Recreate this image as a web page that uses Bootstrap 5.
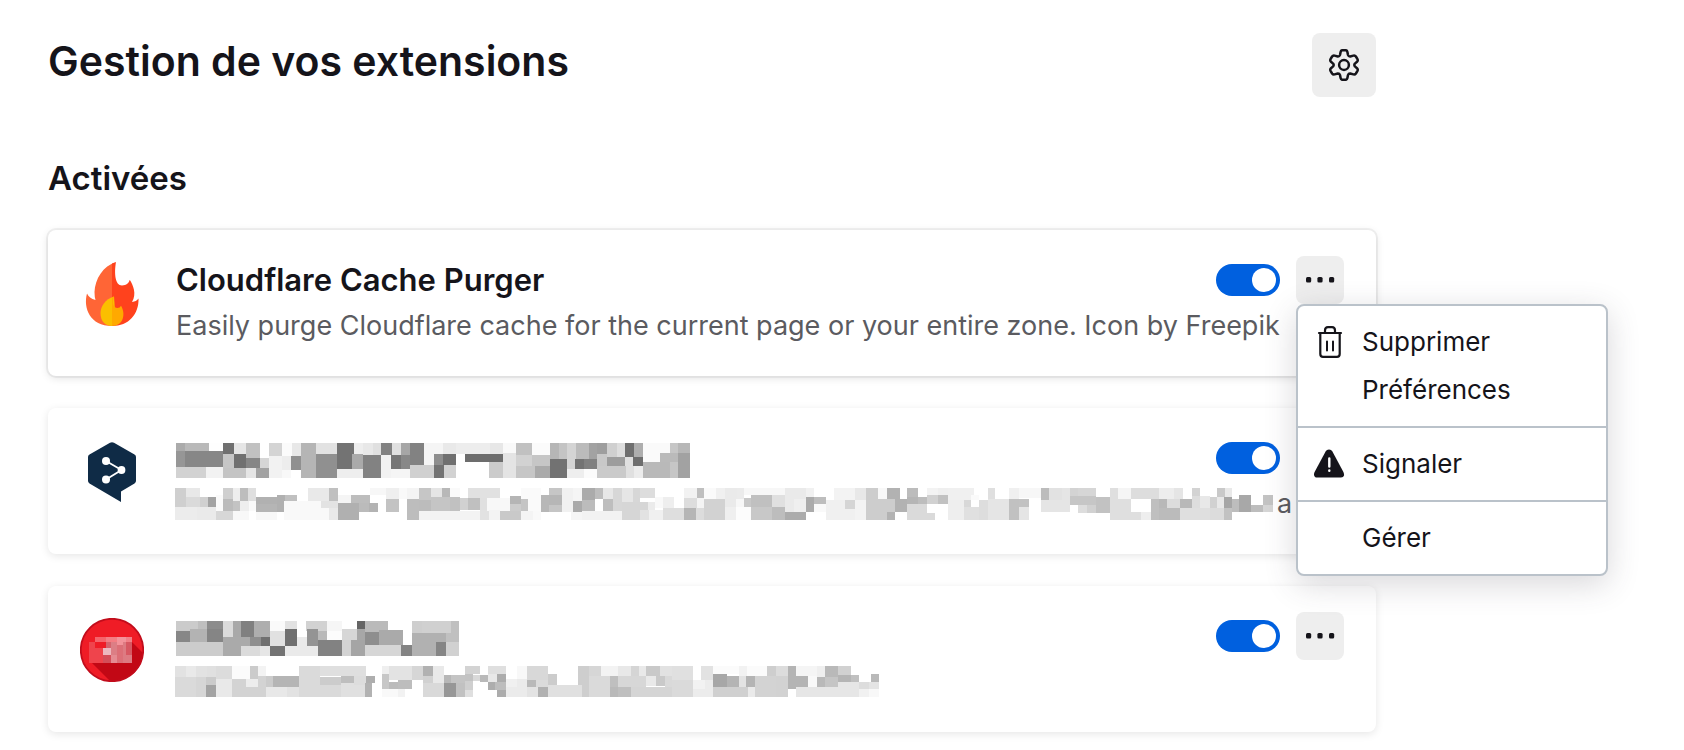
<!DOCTYPE html>
<html lang="fr">
<head>
<meta charset="utf-8">
<meta name="viewport" content="width=device-width, initial-scale=1">
<title>Gestion de vos extensions</title>
<link href="https://cdn.jsdelivr.net/npm/bootstrap@5.3.0/dist/css/bootstrap.min.css" rel="stylesheet">
<style>
  body { font-family: Inter, "Liberation Sans", sans-serif; color: #15141a; background: #fff; overflow: hidden; }
  .addons-page { max-width: 1424px; padding: 33px 48px 16px; }
  .page-title { font-size: 41px; line-height: 56px; font-weight: 600; }
  .section-title { font-size: 33px; line-height: 40px; font-weight: 600; margin: 61px 0 32px; }
  .icon-btn { width: 48px; height: 48px; padding: 0; border: 0; border-radius: 8px; background: #eee; color: #15141a; }
  .icon-btn-lg { width: 64px; height: 64px; }
  .icon-btn:hover { background: #e0e0e1; }
  .addon-list { gap: 32px; }
  .addon-card { height: 146px; padding: 26px 32px; border: 0; border-radius: 8px; background: #fff; box-shadow: 0 2px 8px rgba(12,12,13,.1); }
  .addon-card.is-active { box-shadow: 0 0 0 2px rgba(12,12,13,.05), 0 2px 8px rgba(12,12,13,.12); }
  .addon-icon { width: 64px; height: 64px; margin: 6px 32px 0 0; }
  .addon-name { font-size: 31px; line-height: 40px; font-weight: 600; margin: 0; }
  .addon-desc { font-size: 27px; line-height: 40px; min-height: 40px; color: #5b5b60; margin: 2px 0 0; white-space: nowrap; }
  .addon-head { height: 48px; }
  .mosaic-name { height: 35px; margin-top: 4px; }
  .mosaic-desc { height: 32px; margin-left: -1px; }
  .addon-switch.form-check-input {
    width: 64px; height: 32px; margin: 0 16px 0 0; border: 0; border-radius: 16px; background-color: #0060df;
    background-image: url("data:image/svg+xml,%3Csvg xmlns='http://www.w3.org/2000/svg' viewBox='0 0 32 32'%3E%3Ccircle cx='16' cy='16' r='12' fill='%23fff'/%3E%3C/svg%3E");
    background-size: 32px 32px; background-position: right center;
  }
  .addon-switch.form-check-input:not(:checked) { background-color: #8f8f9d; background-position: left center; }
  .addon-menu.dropdown-menu { top: 48px; left: 0; width: 312px; padding: 12px 0; border: 2px solid #bac2ca; border-radius: 8px; background: #fff; font-size: 26px; box-shadow: 0 8px 32px rgba(58,57,68,.2); }
  .addon-menu .dropdown-item { display: flex; align-items: center; gap: 16px; height: 48px; padding: 0 16px; color: #15141a; line-height: 48px; }
  .addon-menu .dropdown-divider { margin: 12px 0; border-top: 2px solid #bac2ca; opacity: 1; }
  .menu-icon { width: 32px; height: 32px; flex: none; }
</style>
</head>
<body>
<main class="addons-page">
  <header class="d-flex justify-content-between align-items-start">
    <h1 class="page-title m-0">Gestion de vos extensions</h1>
    <button type="button" class="btn icon-btn icon-btn-lg d-flex align-items-center justify-content-center" aria-label="Outils">
      <svg width="32" height="32" viewBox="0 0 32 32" fill="none" stroke="currentColor" stroke-width="2.500" stroke-linejoin="round" aria-hidden="true">
        <path d="M14.300 1.200H17.700Q19.100 1.300 19.400 2.900L20 6Q20.500 7.600 22.200 7.500L25.400 6.600Q27 6.200 27.900 7.500L29.500 10.200Q30.200 11.600 29 12.800L26.900 14.600Q25.800 16 26.900 17.400L29 19.200Q30.200 20.400 29.500 21.800L27.900 24.500Q27 25.800 25.400 25.400L22.200 24.500Q20.500 24.400 20 26L19.400 29.100Q19.100 30.700 17.700 30.800H14.300Q12.900 30.700 12.600 29.100L12 26Q11.500 24.400 9.800 24.500L6.600 25.400Q5 25.800 4.100 24.500L2.500 21.800Q1.800 20.400 3 19.200L5.100 17.400Q6.200 16 5.100 14.600L3 12.800Q1.800 11.600 2.500 10.200L4.100 7.500Q5 6.200 6.600 6.600L9.800 7.500Q11.500 7.600 12 6L12.600 2.900Q12.900 1.300 14.300 1.200Z"/>
        <circle cx="16" cy="16" r="4.900"/>
      </svg>
    </button>
  </header>

  <h2 class="section-title">Activées</h2>

  <section class="addon-list d-flex flex-column" aria-label="Extensions activées">
    <article class="card addon-card is-active flex-row align-items-start">
      <svg class="addon-icon flex-shrink-0" viewBox="0 0 64 64" aria-hidden="true">
        <path fill="#ff6536" d="M36 0C23 4 15 17 14.500 30Q14.500 35 15.500 38C11 37 8.500 34.500 7 31.500C3 46 10 64 32 64L34 32V1Z"/>
        <path fill="#ff421d" d="M32 1.500L36 0C34 11 35 23.500 42 23.500C46.500 23.500 49 21 49.700 17.800C53 23 57 32 52 40Q56.500 39.500 58.500 36.500C59 52 49 64 32 64Z"/>
        <path fill="#fbbf00" d="M34 34.500C25 37 20.500 45 20.500 51C20.500 59 25 64 32 64L35 48Z"/>
        <path fill="#ffa900" d="M32 35.500L34 34.500C32 40 33 46 37.500 46Q40 46 41 43.800C46 52 43.500 64 32 64Z"/>
      </svg>
      <div class="flex-grow-1">
        <div class="addon-head d-flex align-items-center">
          <h3 class="addon-name me-auto">Cloudflare Cache Purger</h3>
          <input class="form-check-input addon-switch" type="checkbox" role="switch" checked aria-label="Activer Cloudflare Cache Purger">
          <div class="position-relative">
            <button type="button" class="btn icon-btn" aria-label="Plus d’options" aria-expanded="true"><svg width="32" height="6" viewBox="0 0 32 6" class="d-block mx-auto" fill="currentColor"><rect x="2" width="5.200" height="5.500" rx="1.500"/><rect x="13.400" width="5.200" height="5.500" rx="1.500"/><rect x="25" width="5.200" height="5.500" rx="1.500"/></svg></button>
            <div class="dropdown-menu show addon-menu">
              <button type="button" class="dropdown-item">
                <svg class="menu-icon" viewBox="0 0 32 32" fill="none" stroke="currentColor" stroke-width="2.200" stroke-linecap="round" aria-hidden="true"><path d="M5 7H27M11 6V4.500Q11 1.100 14 1.100H18Q21 1.100 21 4.500V6M6.300 7.500V28Q6.300 30.900 9 30.900H23Q25.700 30.900 25.700 28V7.500"/><path d="M13 15.500V24.500M19 15.500V24.500" stroke-width="2"/></svg>Supprimer
              </button>
              <button type="button" class="dropdown-item"><span class="menu-icon"></span>Préférences</button>
              <hr class="dropdown-divider">
              <button type="button" class="dropdown-item">
                <svg class="menu-icon" viewBox="0 0 32 32" aria-hidden="true"><path fill="#15141a" d="M15 1.500C13.500 1.500 12.300 2.200 11.600 3.500L.6 24Q-1 27.500 1.400 29.200Q2 29.500 3 29.500H27Q29.500 29.500 30 27.500Q30.300 26 29.400 24L18.400 3.500C17.700 2.200 16.500 1.500 15 1.500Z"/><path fill="none" stroke="#fff" stroke-width="2.400" stroke-linecap="round" d="M15.300 10.500V18.500M15.300 22.500V22.800"/></svg>Signaler
              </button>
              <hr class="dropdown-divider">
              <button type="button" class="dropdown-item"><span class="menu-icon"></span>Gérer</button>
            </div>
          </div>
        </div>
        <p class="addon-desc">Easily purge Cloudflare cache for the current page or your entire zone. Icon by Freepik</p>
      </div>
    </article>

    <article class="card addon-card flex-row align-items-start">
      <svg class="addon-icon flex-shrink-0" viewBox="0 -2 64 64" aria-hidden="true">
        <path fill="#0f2b46" d="M30 .8Q32-.4 34 .8L54.500 12.500Q56 13.400 56 15V39Q56 40.500 54.500 41.400L41 49.500V60L9.500 41.400Q8 40.500 8 39V15Q8 13.400 9.500 12.500Z"/>
        <path fill="none" stroke="#fff" stroke-width="1.800" d="M26 19L41.500 28L26 37.500"/>
        <circle cx="26" cy="19" r="4" fill="#fff"/><circle cx="41.500" cy="28" r="3.900" fill="#fff"/><circle cx="26" cy="37.500" r="4" fill="#fff"/>
      </svg>
      <div class="flex-grow-1">
        <div class="addon-head d-flex align-items-center">
          <svg class="mosaic-name me-auto" width="514" viewBox="408 129 1542 105" shape-rendering="crispEdges" data-tiles="nameA" role="img" aria-label="Nom masqué"></svg>
          <input class="form-check-input addon-switch" type="checkbox" role="switch" checked aria-label="Activer la deuxième extension">
          <button type="button" class="btn icon-btn" aria-label="Plus d’options"><svg width="32" height="6" viewBox="0 0 32 6" class="d-block mx-auto" fill="currentColor"><rect x="2" width="5.200" height="5.500" rx="1.500"/><rect x="13.400" width="5.200" height="5.500" rx="1.500"/><rect x="25" width="5.200" height="5.500" rx="1.500"/></svg></button>
        </div>
        <p class="addon-desc d-flex align-items-center"><svg class="mosaic-desc flex-shrink-0 me-1" width="1098" viewBox="405 267 3294 96" shape-rendering="crispEdges" data-tiles="descA" role="img" aria-label="Description masquée"></svg>a</p>
      </div>
    </article>

    <article class="card addon-card flex-row align-items-start">
      <svg class="addon-icon flex-shrink-0" viewBox="0 0 64 64" aria-hidden="true">
        <circle cx="32" cy="32" r="31" fill="#ef1c26"/>
        <path fill="#c20815" d="M52 24L63 35C62 52 49 63 32 63L29 62L12 45L52 44Z"/>
        <circle cx="32" cy="32" r="31.200" fill="none" stroke="#c20c1b" stroke-width="1.800"/>
        <g shape-rendering="crispEdges">
          <path fill="#ef444c" d="M9 24H23V45H9Z"/><path fill="#f5646b" d="M15 19H26V24H15Z"/><path fill="#ef1c26" d="M15 24H26V30H15Z"/>
          <path fill="#f47d83" d="M26 19H37V24H26Z"/><path fill="#f3939a" d="M37 19H46V27H37Z"/><path fill="#f17f86" d="M46 19H52V24H46Z"/>
          <path fill="#d5636c" d="M26 24H31V30H26Z"/><path fill="#dc7e85" d="M31 24H37V45H31Z"/><path fill="#dc6f77" d="M37 27H46V45H37Z"/>
          <path fill="#dd7b82" d="M43 24H52V45H43Z"/><path fill="#d75862" d="M46 24H52V37H46Z"/><path fill="#ef444c" d="M15 30H23V45H15Z"/><path fill="#edb8bf" d="M23 30H31V37H23Z"/>
          <path fill="#d34e59" d="M23 37H31V45H23Z"/><path fill="#e58b92" d="M31 37H37V45H31Z"/>
        </g>
      </svg>
      <div class="flex-grow-1">
        <div class="addon-head d-flex align-items-center">
          <svg class="mosaic-name me-auto" width="283" viewBox="408 123 849 105" shape-rendering="crispEdges" data-tiles="nameB" role="img" aria-label="Nom masqué"></svg>
          <input class="form-check-input addon-switch" type="checkbox" role="switch" checked aria-label="Activer la troisième extension">
          <button type="button" class="btn icon-btn" aria-label="Plus d’options"><svg width="32" height="6" viewBox="0 0 32 6" class="d-block mx-auto" fill="currentColor"><rect x="2" width="5.200" height="5.500" rx="1.500"/><rect x="13.400" width="5.200" height="5.500" rx="1.500"/><rect x="25" width="5.200" height="5.500" rx="1.500"/></svg></button>
        </div>
        <p class="addon-desc d-flex align-items-center"><svg class="mosaic-desc" width="704" viewBox="405 261 2112 96" shape-rendering="crispEdges" data-tiles="descB" role="img" aria-label="Description masquée"></svg></p>
      </div>
    </article>
  </section>
</main>
<script src="https://cdn.jsdelivr.net/npm/bootstrap@5.3.0/dist/js/bootstrap.bundle.min.js"></script>
<script>
// Redacted text: each group is [dx, dy, "x1 x2 y1 y2 grey; …"], grey being one hex byte.
const tiles = {
  nameA: [[0, 0, `408 435 129 153 ab;435 507 129 153 b9;507 549 129 153 fe;408 435 153 201 96;435 549 153 201 87;408 498 201 234 d2;498 549 201 234 f2;549 582 129 162 70;549 582 162 204 c6;549 618 204 234 c4;582 618 129 162 e6;618 660 129 174 c1;582 618 162 204 70;618 660 174 204 86;618 648 204 234 e5;648 687 204 234 a2;660 687 174 204 d6;687 726 129 168 d4;687 726 168 234 f2;726 756 129 168 fb;726 753 168 210 ed;756 783 129 168 e8;753 783 168 210 90;726 753 210 234 f8;783 828 129 234 b5;828 891 129 162 e2;828 891 162 234 90;891 942 129 207 73;942 969 129 162 ee;936 969 162 207 aa;891 969 207 234 ee;969 999 129 165 e8;999 1023 129 165 e0;969 1023 165 234 82;1023 1056 129 165 82;1023 1053 165 234 f2`],
    [990, 90, `66 93 39 75 e0;93 120 39 75 a6;120 162 39 117 82;63 93 75 117 76;93 120 75 117 88;63 120 117 144 f5;162 219 39 105 f5;120 192 105 144 d0;219 258 39 72 e9;192 219 72 105 8e;219 258 72 105 70;192 222 105 144 73;222 258 105 144 d2;258 360 39 72 ed;360 399 39 72 e7;285 399 72 96 6d;357 399 96 144 cb;399 438 39 69 f9;399 438 69 144 e4;438 486 39 75 c1;486 540 39 75 fb;438 486 75 108 d2;486 540 75 108 c6;438 495 108 144 c6;495 540 108 144 aa;540 567 39 87 b6;567 591 39 87 c4;540 591 87 144 72;591 618 39 117 d4;618 657 39 87 bb;657 681 39 87 a2;681 711 39 72 9e;615 642 87 117 73;642 681 87 117 80;591 642 117 144 ee;642 681 117 144 fb;681 711 72 108 c8;711 741 39 81 d0;741 765 39 81 de;711 765 81 108 9d;681 768 108 144 ca;765 792 39 81 6f;792 819 39 81 ae;765 789 81 108 e0;789 819 81 108 6e;768 792 108 144 e0;792 819 108 144 ec;819 900 39 96 fa;870 924 69 96 ba;900 924 39 69 c6;924 960 39 69 b7;819 900 96 144 b9;900 927 96 144 c6;924 960 69 144 a2`]],
  descA: [[0, 0, `405 438 267 324 cf;438 480 267 294 e8;438 480 294 324 da;480 504 294 324 d0;504 528 294 324 a3;405 471 324 363 ec;471 528 324 363 ea;528 549 288 336 fa;528 579 336 363 d7;549 579 267 300 cf;579 600 267 306 ee;549 579 300 336 bb;579 600 306 336 c3;600 624 267 306 bd;624 648 267 306 df;600 627 306 336 ee;579 627 336 363 f8;627 648 306 336 fa;648 711 294 315 b1;648 711 315 339 b5;711 735 288 339 b0;735 771 288 312 c0;648 711 339 363 f8;732 867 306 363 f9;804 867 267 306 e9;867 894 267 306 c0;843 894 306 327 e3;867 894 327 363 e9;894 933 288 312 f5;894 957 312 363 b0;933 990 288 312 bd;957 987 312 339 bb;987 1014 312 339 b3;990 1038 267 288 f7;1038 1077 267 300 ef;1038 1077 300 339 c3`],
    [990, 90, `87 111 177 210 f9;111 147 177 210 f4;111 147 210 273 bd;147 183 177 213 c6;183 216 177 204 e5;216 240 177 204 b8;147 183 213 246 bc;183 240 204 246 c5;240 270 204 246 c1;240 270 177 204 fa;270 294 207 243 d1;294 330 207 243 c0;294 390 177 207 e1;330 351 207 243 e0;147 330 246 273 f3;330 357 243 273 e2;351 420 207 246 f8;357 390 243 273 f3;390 453 246 273 c9;420 453 201 225 b5;420 453 225 246 cc;453 474 210 246 c4;453 513 177 210 fa;474 513 210 246 fa;453 489 246 273 f4;489 513 246 273 f9;513 537 198 249 b7;537 576 177 198 c6;537 576 198 228 b6;537 576 228 249 c5;576 609 177 249 f1;609 636 177 216 f5;609 636 216 249 aa;603 636 249 273 f5;636 675 177 213 ab;675 699 177 210 bd;636 675 213 246 bc;636 756 246 273 f2;699 729 177 210 e7;729 756 177 207 d7;699 729 210 246 be;729 756 207 246 d7;756 789 177 219 e6;789 810 177 219 d7;810 855 177 207 dd;756 834 219 246 d6;756 810 246 273 d6;810 837 243 273 e2;834 855 219 243 eb;855 879 204 237 f9;879 912 204 237 ee;837 879 243 273 f0;879 942 237 273 de;942 981 177 207 f2;981 1002 177 207 bf;942 981 207 237 dd;981 1002 207 237 f4;942 978 237 273 b5;978 1002 237 273 dc;1002 1065 210 273 d2`],
    [1980, 210, `0 12 57 87 bf;12 48 57 90 fa;48 75 57 90 f0;75 111 57 114 ea;111 132 57 90 eb;12 75 90 153 d2;75 108 114 153 ef;108 132 90 114 f7;108 153 114 153 fc;132 255 57 78 f7;132 153 87 114 c8;153 216 78 114 c0;216 255 78 114 e0;153 216 114 153 c8;216 255 114 153 bd;255 318 57 129 ea;282 318 90 129 ef;255 318 129 153 ac;318 342 57 84 f1;318 342 84 129 ab;342 378 84 105 bd;342 378 105 129 f9;402 465 57 93 f3;378 465 93 153 f0;435 465 93 120 d5;465 498 57 93 e8;465 498 93 153 f3;498 534 57 153 cd;534 561 57 90 f8;561 600 57 90 b2;534 585 90 129 cd;534 561 129 153 cd;561 585 129 153 b3;585 621 90 129 b2;621 654 57 84 bc;621 654 84 105 b5;654 681 84 105 bd;621 681 105 153 da;681 705 132 153 da;681 714 57 78 f3;681 714 78 105 d1;714 744 78 105 c1;714 744 57 78 ef;744 822 57 93 f0;744 792 93 153 ee;792 813 93 114 d8;813 837 78 93 fa;792 837 114 153 e0;837 864 93 153 dd;864 885 57 90 df;864 900 90 153 e5`],
    [2880, 210, `0 27 90 153 e5;27 57 57 90 f0;57 123 57 87 f7;27 57 90 153 c1;57 87 90 114 c2;57 87 114 153 e5;123 147 57 93 bc;147 186 57 93 e2;186 210 57 93 e5;123 210 93 129 e5;210 234 57 81 d3;234 288 57 84 d6;210 288 81 108 c6;234 261 108 132 dd;261 288 108 132 d1;288 330 84 132 c2;330 354 57 90 df;354 393 57 90 f5;330 393 90 153 df;393 477 57 90 dd;393 423 129 153 df;423 453 129 153 ee;453 477 90 153 bf;477 501 90 117 b8;477 540 117 153 bb;477 522 57 90 ed;522 549 57 90 e5;501 540 90 117 dc;540 576 90 117 b8;576 600 57 81 d3;576 600 81 117 dd;600 630 81 117 e8;630 651 84 117 d1;540 630 117 153 df;630 672 117 153 dc;651 675 57 84 c9;675 696 57 84 e9;651 672 84 117 e8;672 696 84 117 a6;672 696 117 153 c2;696 717 90 129 bd;717 753 78 129 a8;753 789 108 129 bd;789 819 78 108 c3;789 819 108 129 d5`]],
  nameB: [[0, 0, `408 474 123 153 cb;474 501 123 147 bf;501 549 123 147 8c;408 450 153 186 87;450 501 147 186 b3;501 549 147 186 85;408 549 186 228 cc;549 579 123 171 db;579 603 123 171 a9;603 642 123 171 80;642 690 123 171 ae;549 603 171 228 aa;603 630 171 198 aa;630 663 171 198 8e;663 690 171 198 70;603 660 198 228 db;660 690 198 228 e6;690 735 123 153 fa;735 771 123 147 e2;690 735 153 198 e1;735 771 147 198 70;690 735 198 228 73;735 834 198 228 ea;771 801 171 198 ea;798 861 123 153 d2;801 834 147 198 94;834 861 153 180 b9;861 906 123 153 f6;861 906 153 180 fc;834 906 180 228 82;906 951 147 180 d6;906 933 180 228 d3;933 975 180 228 a5;951 975 123 147 65;951 975 147 180 a7;975 1044 123 156 ba;975 1017 156 195 8e;1017 1089 150 195 aa;975 1083 195 228 d6`],
    [990, 90, `93 126 105 138 83;126 156 33 69 ce;156 243 33 69 d0;243 267 33 69 c0;126 228 69 138 b1;228 267 69 96 c0;198 228 96 138 85;228 267 96 138 d1`]],
  descB: [[0, 0, `405 438 261 294 e2;438 468 261 294 e9;468 501 261 294 e2;501 528 261 294 e0;528 576 261 300 dc;405 468 294 354 da;468 498 294 354 d6;498 528 294 318 cb;498 528 318 354 a3;528 576 300 354 e9;576 630 261 300 fb;630 654 261 300 cb;654 678 261 291 f3;576 618 300 324 d3;618 654 300 324 ed;576 678 324 354 d3;654 678 291 324 d3;678 699 291 324 cb;699 777 291 324 b5;678 741 324 354 e8;741 777 324 354 e2;777 840 261 354 da;840 978 261 291 df;840 903 294 318 cc;903 942 291 312 be;840 903 318 354 da;903 975 312 354 e0;942 978 291 318 dd;978 1005 291 312 ae;975 996 312 354 b2`],
    [990, 90, `36 57 171 195 ef;57 126 171 213 e3;36 57 195 240 c7;57 84 219 240 bb;84 126 213 240 bd;36 84 240 264 f9;84 105 240 264 f2;126 159 171 213 d6;159 189 171 201 b1;189 222 171 222 e9;159 189 201 222 d1;159 222 222 264 d9;222 243 198 222 b7;243 285 198 222 c4;222 258 222 264 97;258 285 222 264 c1;285 330 171 195 d3;285 309 195 216 c3;309 330 198 216 d9;330 354 198 219 b9;285 309 216 243 cf;285 309 243 264 df;354 408 171 195 df;354 381 195 219 e8;381 408 195 219 ac;354 375 219 243 ad;375 408 219 243 bd;381 408 243 264 ac;441 471 171 210 f8;408 441 210 234 f0;408 471 234 264 eb;441 471 210 234 eb;471 534 171 213 d8;471 498 213 234 b9;498 534 213 234 db;471 504 234 264 e3;504 534 234 264 b1;534 561 195 228 cc;534 636 228 264 e0;624 657 171 228 ce;636 657 228 264 ce;657 693 171 201 d6;693 744 171 201 f3;744 783 171 201 e8;783 807 171 201 d5;807 828 171 201 e9;828 870 171 201 c9;870 900 171 201 e0;657 720 201 264 da;720 744 201 234 bf;744 828 201 234 d7;720 744 234 264 b9;744 783 234 264 bf;783 900 234 264 d5;828 858 201 231 e9;858 885 201 231 c9;885 906 201 234 d9`],
    [1800, 210, `60 96 51 81 e2;96 159 51 93 e0;96 159 93 144 da;90 96 114 144 d5;159 195 93 120 f2;183 219 51 93 e2;195 219 93 120 ec;159 219 120 144 ec;219 297 51 75 fb;297 321 51 81 f2;321 381 51 81 fb;219 261 75 114 a7;261 297 81 114 b4;297 318 81 114 e3;318 345 81 114 b4;219 324 114 144 d0;324 345 114 144 ea;345 408 81 144 d3;381 408 51 81 ce;408 444 51 81 dc;408 444 81 144 d2;444 468 51 120 b4;468 504 81 114 b4;468 531 51 81 f5;504 531 81 114 f9;531 555 51 84 ef;531 555 84 114 b9;555 594 51 84 b9;594 633 51 78 d1;555 594 84 114 c5;594 633 78 99 b5;633 657 78 99 c0;468 657 114 144 e6;594 657 99 114 e6;657 693 99 120 dd;693 717 75 99 b9;687 717 99 120 e4;657 687 120 144 f1;687 717 120 144 f8`]]
};
document.querySelectorAll('[data-tiles]').forEach(svg => {
  for (const [dx, dy, list] of tiles[svg.dataset.tiles]) {
    for (const tile of list.split(';')) {
      const [x1, x2, y1, y2, g] = tile.split(' ');
      const r = document.createElementNS('http://www.w3.org/2000/svg', 'rect');
      r.setAttribute('x', +x1 + dx);
      r.setAttribute('y', +y1 + dy);
      r.setAttribute('width', x2 - x1);
      r.setAttribute('height', y2 - y1);
      r.setAttribute('fill', '#' + g + g + g);
      svg.append(r);
    }
  }
});
</script>
</body>
</html>
